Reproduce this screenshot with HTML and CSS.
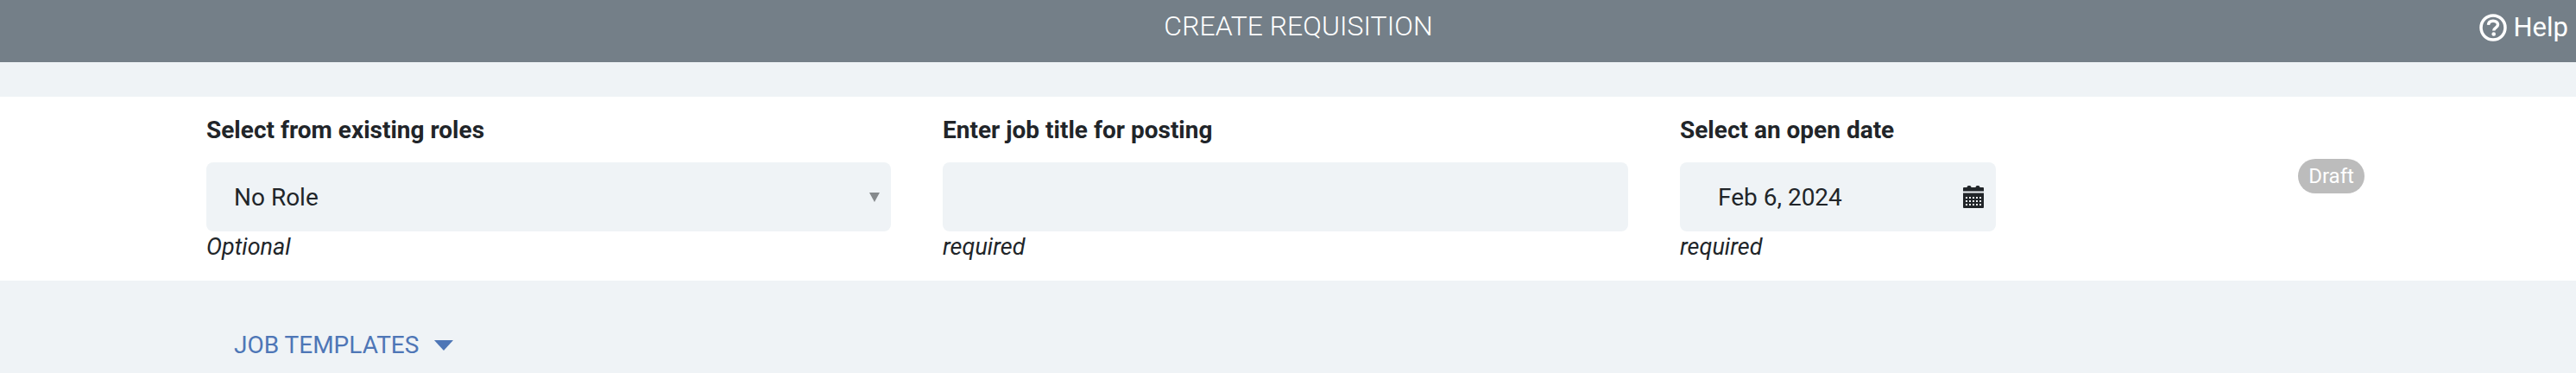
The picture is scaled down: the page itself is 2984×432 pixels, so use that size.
FILE: index.html
```html
<!DOCTYPE html>
<html lang="en">
<head>
<meta charset="utf-8">
<title>Create Requisition</title>
<link rel="stylesheet" href="styles.css">
</head>
<body>
<header class="topbar">
  <h1 class="topbar-title">CREATE REQUISITION</h1>
  <a class="help">
    <svg class="help-icon" viewBox="0 0 32 32" aria-hidden="true">
      <circle class="help-ring" cx="16" cy="16" r="14"/>
      <path class="help-mark" d="M10.500 12.800c.2-3 2.500-4.600 5.500-4.600 3.200 0 5.500 1.800 5.500 4.400 0 3.600-4.800 3.400-4.800 7"/>
      <circle class="help-dot" cx="16.700" cy="23.500" r="2.300"/>
    </svg>
    <span>Help</span>
  </a>
</header>
<section class="form-band">
  <div class="field field-role">
    <div class="field-label">Select from existing roles</div>
    <div class="control control-select">
      <span>No Role</span>
      <svg class="select-arrow" viewBox="0 0 12 11" aria-hidden="true"><path d="M0 0h12L6 11z"/></svg>
    </div>
    <div class="field-hint">Optional</div>
  </div>
  <div class="field field-title">
    <div class="field-label">Enter job title for posting</div>
    <div class="control"></div>
    <div class="field-hint">required</div>
  </div>
  <div class="field field-date">
    <div class="field-label">Select an open date</div>
    <div class="control control-date">
      <span>Feb 6, 2024</span>
      <svg class="calendar" viewBox="0 0 24 26" aria-hidden="true">
        <path d="M0 6.500V3q0-1 1-1h3.500q0-2 2-2h1q2 0 2 2h5q0-2 2-2h1q2 0 2 2H23q1 0 1 1v3.500z"/>
        <path fill-rule="evenodd" d="M0 8.500h24V25q0 1-1 1H1q-1 0-1-1zM3 13v2h2v-2zm4 0v2h2v-2zm4 0v2h2v-2zm4 0v2h2v-2zm4 0v2h2v-2zM3 17v2h2v-2zm4 0v2h2v-2zm4 0v2h2v-2zm4 0v2h2v-2zm4 0v2h2v-2zM3 21v2h2v-2zm4 0v2h2v-2zm4 0v2h2v-2zm4 0v2h2v-2zm4 0v2h2v-2z"/>
      </svg>
    </div>
    <div class="field-hint">required</div>
  </div>
  <span class="status-badge">Draft</span>
</section>
<section class="templates">
  <span class="templates-link">JOB TEMPLATES</span>
  <svg class="templates-caret" viewBox="0 0 22 12" aria-hidden="true"><path d="M0 0h22L11 12z"/></svg>
</section>
</body>
</html>
```

FILE: styles.css
```css
* { box-sizing: border-box; }
html, body { margin: 0; height: 100%; }
body {
  background: #eff3f6;
  font-family: Roboto, "Liberation Sans", sans-serif;
  color: #212529;
  overflow: hidden;
}
.topbar {
  height: 72px;
  background: #747f88;
  color: #fff;
  display: flex;
  justify-content: center;
  position: relative;
}
.topbar-title {
  margin: 0 0 0 24px;
  font-size: 32px;
  font-weight: 300;
  line-height: 60px;
}
.help {
  position: absolute;
  top: 12px;
  right: 9px;
  display: flex;
  align-items: center;
  gap: 8px;
  font-size: 31px;
  line-height: 40px;
}
.help-icon { width: 32px; height: 32px; display: block; }
.help-ring, .help-mark { fill: none; stroke: #fff; stroke-width: 3.500; }
.help-dot { fill: #fff; }
.form-band {
  margin-top: 40px;
  height: 213px;
  background: #fff;
  padding: 23px 0 0 239px;
  display: flex;
  align-items: flex-start;
}
.field-role { width: 793px; margin-right: 60px; }
.field-title { width: 794px; margin-right: 60px; }
.field-date { width: 366px; }
.field-label {
  font-size: 28px;
  font-weight: 700;
  line-height: 32px;
  margin-bottom: 21px;
}
.control {
  height: 80px;
  background: #eff3f6;
  border-radius: 8px;
  font-size: 28px;
  display: flex;
  align-items: center;
  justify-content: space-between;
}
.control-select { padding: 0 13px 0 32px; }
.select-arrow { width: 12px; height: 11px; fill: #868a8d; }
.control-date { padding: 0 14px 0 44px; }
.calendar { width: 24px; height: 26px; fill: #212529; }
.field-hint {
  font-size: 27px;
  font-style: italic;
  line-height: 28px;
  margin-top: 4px;
}
.status-badge {
  margin: 49px 0 0 350px;
  width: 77px;
  height: 40px;
  border-radius: 20px;
  background: #bcbcbc;
  color: #fff;
  font-size: 24px;
  line-height: 40px;
  text-align: center;
}
.templates {
  padding: 55px 0 0 271px;
  display: flex;
  align-items: center;
  gap: 18px;
  color: #4e76b6;
}
.templates-link { font-size: 28px; line-height: 40px; }
.templates-caret { width: 22px; height: 12px; fill: #4e76b6; }
```
